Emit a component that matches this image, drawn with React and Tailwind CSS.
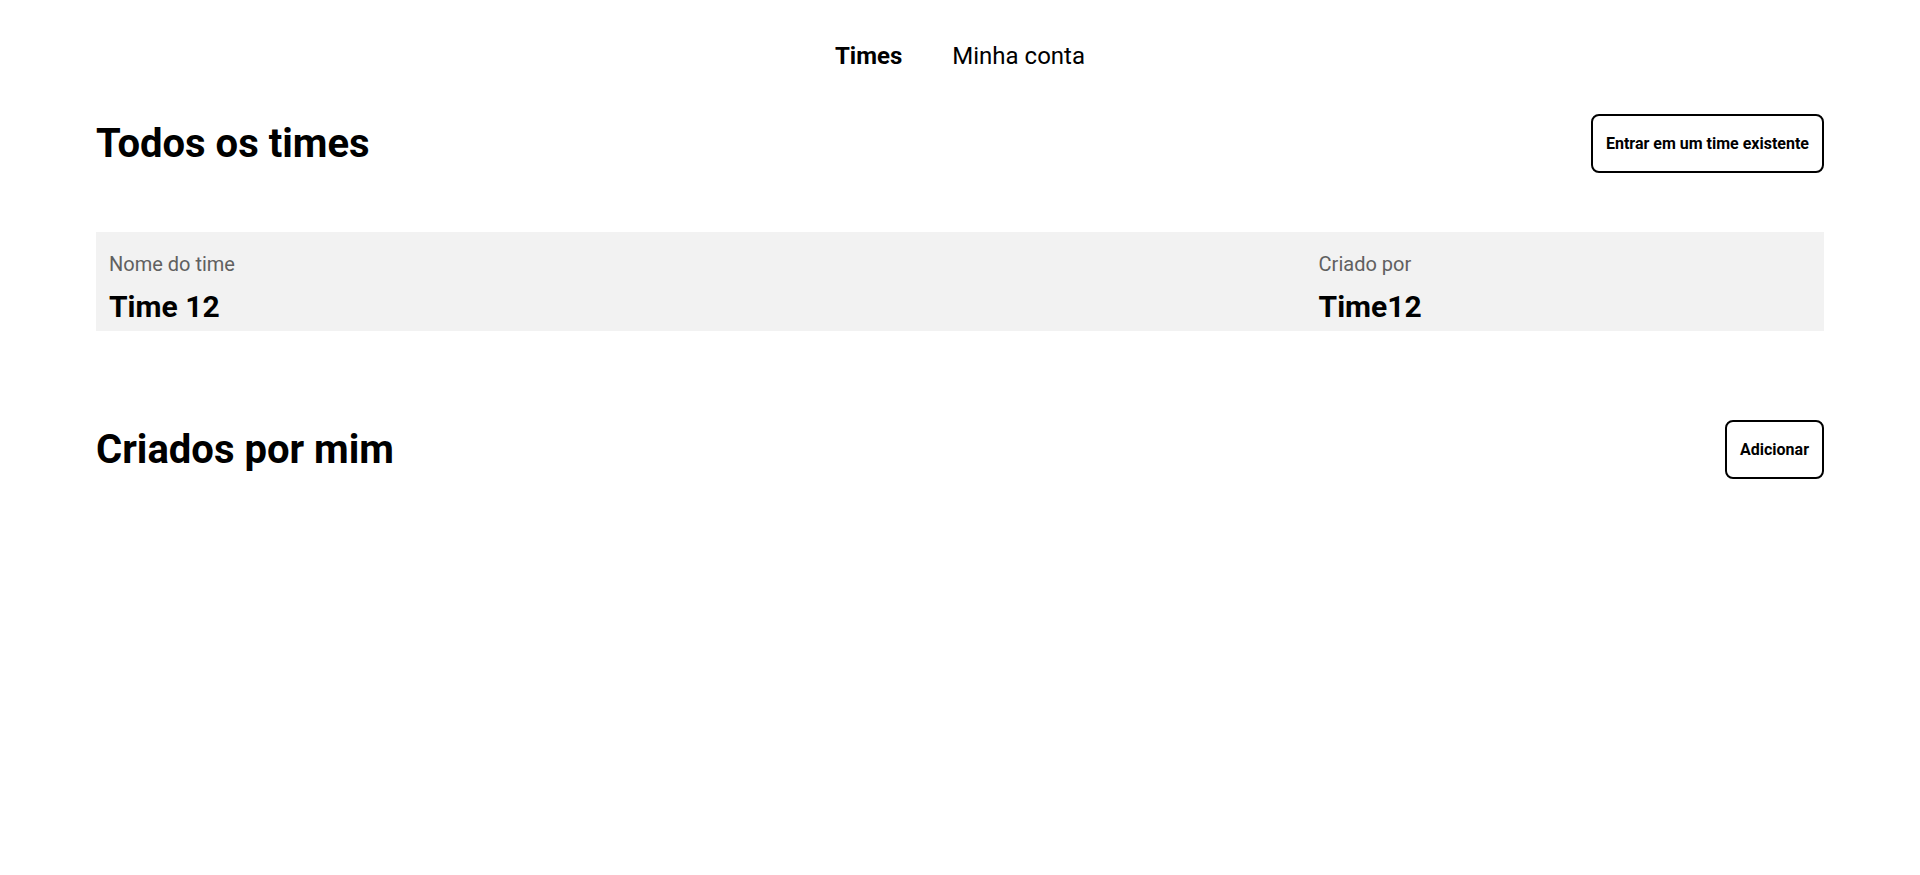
const teams = [{ name: "Time 12", owner: "Time12" }];

function SectionHeader({ title, action }) {
  return (
    <header className="flex items-center justify-between">
      <h1 className="text-[40px] leading-[49px] font-bold">{title}</h1>
      <button
        type="button"
        className="cursor-pointer rounded-lg border-2 border-black bg-white px-[13px] py-4 text-base leading-[23px] font-bold"
      >
        {action}
      </button>
    </header>
  );
}

function Field({ label, value }) {
  return (
    <div className="px-[13px]">
      <dt className="text-xl leading-6 text-[#606060]">{label}</dt>
      <dd className="mt-[13px] text-3xl leading-9 font-bold">{value}</dd>
    </div>
  );
}

export default function App() {
  return (
    <div className="min-h-screen bg-white px-[5%] font-['Roboto',sans-serif] text-black">
      <nav className="flex justify-center gap-[50px] pt-10 text-2xl leading-8">
        <a href="#times" className="font-bold">
          Times
        </a>
        <a href="#conta">Minha conta</a>
      </nav>
      <main>
        <section className="pt-[42px]">
          <SectionHeader title="Todos os times" action="Entrar em um time existente" />
          <ul className="mt-[59px]">
            {teams.map((team) => (
              <li key={team.name} className="bg-[#f2f2f2] pt-5 pb-1.5">
                <dl className="grid grid-cols-[70%_30%]">
                  <Field label="Nome do time" value={team.name} />
                  <Field label="Criado por" value={team.owner} />
                </dl>
              </li>
            ))}
          </ul>
        </section>
        <section className="pt-[89px]">
          <SectionHeader title="Criados por mim" action="Adicionar" />
        </section>
      </main>
    </div>
  );
}
